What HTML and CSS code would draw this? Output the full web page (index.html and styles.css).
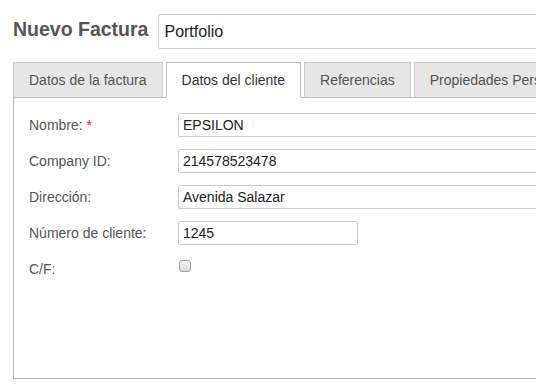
FILE: index.html
```html
<!DOCTYPE html>
<html lang="es">
<head>
<meta charset="utf-8">
<title>Nuevo Factura</title>
<link rel="stylesheet" href="styles.css">
</head>
<body>
<div class="page">
  <div class="header">
    <h1 class="title">Nuevo Factura</h1>
    <input class="title-input" type="text" value="Portfolio">
  </div>
  <div class="tabs">
    <div class="tab">Datos de la factura</div>
    <div class="tab active">Datos del cliente</div>
    <div class="tab">Referencias</div>
    <div class="tab">Propiedades Personalizadas</div>
  </div>
  <div class="panel">
    <div class="form">
      <label class="label">Nombre: <span class="req">*</span></label>
      <input class="field wide" type="text" value="EPSILON">
      <label class="label">Company ID:</label>
      <input class="field wide" type="text" value="214578523478">
      <label class="label">Dirección:</label>
      <input class="field wide" type="text" value="Avenida Salazar">
      <label class="label">Número de cliente:</label>
      <input class="field short" type="text" value="1245">
      <label class="label">C/F:</label>
      <div class="check-cell"><span class="checkbox"></span></div>
    </div>
  </div>
</div>
</body>
</html>
```

FILE: styles.css
```css
html, body {
  margin: 0;
  padding: 0;
  background: #fff;
  overflow: hidden;
  width: 536px;
  height: 389px;
}
body {
  font-family: "Liberation Sans", Arial, sans-serif;
  color: #555;
}
.page {
  padding: 14px 0 0 13px;
  width: 700px;
}
.header {
  display: flex;
  align-items: center;
  gap: 10px;
  height: 35px;
}
.title {
  margin: 0;
  font-size: 19.5px;
  font-weight: bold;
  color: #555;
  line-height: 35px;
  position: relative;
  top: -2px;
}
.title-input {
  box-sizing: border-box;
  width: 420px;
  height: 35px;
  border: 1px solid #ccc;
  border-radius: 2px;
  padding: 0 5px;
  font-family: "Liberation Sans", Arial, sans-serif;
  font-size: 16px;
  color: #222;
  background: #fff;
  outline: none;
}
.tabs {
  display: flex;
  gap: 3px;
  margin-top: 13px;
  margin-bottom: -1px;
  position: relative;
  z-index: 1;
}
.tab {
  box-sizing: border-box;
  height: 36px;
  line-height: 34px;
  padding: 0 15px;
  border: 1px solid #ccc;
  border-bottom-color: #bbb;
  background: #e6e6e6;
  font-size: 14px;
  color: #555;
  white-space: nowrap;
}
.tab.active {
  background: #fff;
  border-color: #bbb;
  border-bottom-color: #fff;
  color: #333;
}
.panel {
  box-sizing: border-box;
  height: 282px;
  border: 1px solid #b7b7b7;
  padding: 15px 0 0 15px;
}
.form {
  display: grid;
  grid-template-columns: 149px auto;
  row-gap: 12px;
  align-items: center;
}
.label {
  font-size: 14px;
  color: #555;
  line-height: 24px;
}
.req {
  color: #e02020;
}
.field {
  box-sizing: border-box;
  height: 24px;
  border: 1px solid #ccc;
  border-radius: 2px;
  padding: 0 4px;
  font-family: "Liberation Sans", Arial, sans-serif;
  font-size: 14px;
  color: #222;
  background: #fff;
  outline: none;
}
.field.wide {
  width: 440px;
}
.field.short {
  width: 180px;
}
.check-cell {
  height: 24px;
  display: flex;
  align-items: flex-start;
}
.checkbox {
  display: block;
  box-sizing: border-box;
  width: 12px;
  height: 12px;
  margin: 3px 0 0 1px;
  border: 1px solid #a0a0a0;
  border-radius: 3px;
  background: linear-gradient(#f2f2f2, #dcdcdc);
}
```
